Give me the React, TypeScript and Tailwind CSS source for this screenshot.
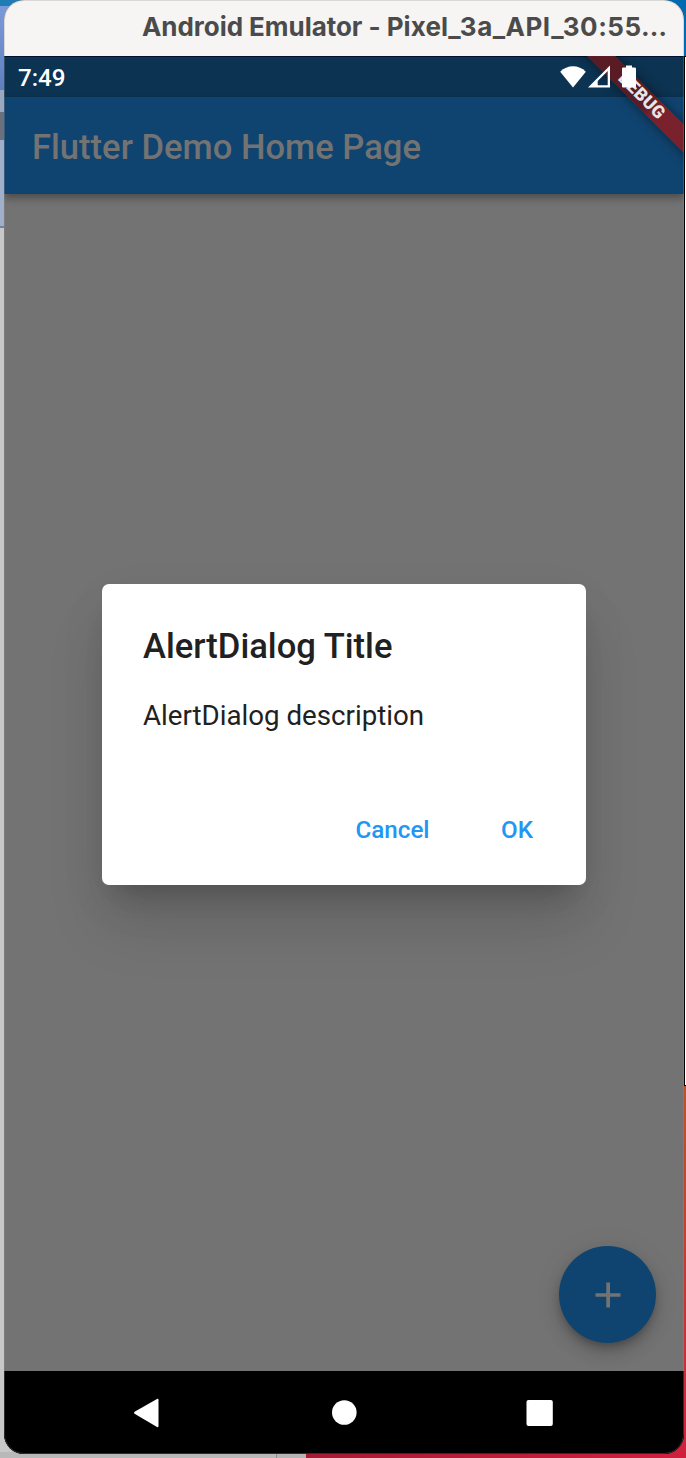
export default function App() {
  return (
    <div className="relative flex h-[1458px] w-[686px] overflow-hidden bg-[#c8c8c8] font-['Roboto',sans-serif]">
      <Desktop />
      <div className="relative ml-1 flex h-[1454px] w-[680px] flex-col overflow-hidden rounded-[20px] bg-black">
        <header className="h-14 shrink-0 bg-[#f6f5f3] pl-[138px] pt-[10px] font-['Inter',sans-serif] text-[26px] leading-[34px] font-bold whitespace-pre text-[#4b4b4b]">
          <span className="tracking-[-0.05px]">Android Emulator - </span>
          <span className="tracking-[0.1px]">Pixel</span>
          <span className="tracking-[0.5px]">_3a_API_30:55…</span>
        </header>
        <div className="relative flex grow flex-col overflow-hidden bg-[#737373]">
          <DebugRibbon />
          <div className="flex h-[41px] shrink-0 items-center justify-between border-t border-[#02112f] bg-[#0c3352] pr-[47px] pl-[14px]">
            <span className="pt-[2px] text-[24.2px] leading-none font-medium text-white">7:49</span>
            <StatusIcons />
          </div>
          <div className="flex h-[97px] shrink-0 items-center bg-[#104470] pt-[3px] pl-[28px] shadow-[0_4px_8px_rgba(0,0,0,0.35)]">
            <h1 className="text-[34.6px] leading-none font-medium whitespace-nowrap text-[#737373]">Flutter Demo Home Page</h1>
          </div>
          <main className="flex grow flex-col">
            <section className="mt-[390px] ml-[98px] flex h-[301px] w-[484px] shrink-0 flex-col rounded-[7px] bg-white px-[41px] shadow-[0_19px_26px_-12px_rgba(0,0,0,0.2),0_42px_60px_-2px_rgba(0,0,0,0.12),0_16px_60px_0_rgba(0,0,0,0.04)]">
              <h2 className="mt-[45px] text-[34.6px] leading-[35px] font-medium text-[#212121]">AlertDialog Title</h2>
              <p className="mt-[36px] text-[27.7px] leading-[32px] text-[#212121]">AlertDialog description</p>
              <div className="mt-[83px] flex justify-end gap-[71.5px] pr-[12px] text-[24.2px] leading-[30px] font-medium text-[#2196f3]">
                <button>Cancel</button>
                <button>OK</button>
              </div>
            </section>
            <button aria-label="Add" className="mt-auto mr-[28px] mb-[28px] flex size-[97px] items-center justify-center self-end rounded-full bg-[#104470] shadow-[0_5px_9px_-2px_rgba(0,0,0,0.25),0_10px_17px_rgba(0,0,0,0.15),0_2px_30px_rgba(0,0,0,0.07)]">
              <svg width="26" height="26" viewBox="0 0 26 26" fill="#737373">
                <path d="M11.3.5H15v10.800H25.500v3.500H15V25.500h-3.700V14.800H.5v-3.500h10.800z" />
              </svg>
            </button>
          </main>
        </div>
        <NavBar />
        <div className="pointer-events-none absolute inset-0 rounded-[20px] shadow-[inset_0_0_0_1px_rgba(150,150,150,0.3)]" />
      </div>
    </div>
  );
}

function Desktop() {
  return (
    <div className="absolute inset-0 flex flex-col justify-between">
      <div className="flex justify-between">
        <div className="flex w-[30px] flex-col">
          <div className="h-[6px] bg-[#1d7db4]" />
          <div className="h-[84px] bg-linear-to-b from-[#7b9ad8] to-[#5f80c0]" />
          <div className="h-[22px] bg-[#9aa9c0]" />
          <div className="h-[28px] bg-[#6b717c]" />
          <div className="h-[86px] bg-[#a0b0cb]" />
          <div className="h-[2px] bg-[#74829a]" />
        </div>
        <div className="flex w-[30px] flex-col items-end">
          <div className="h-[56px] w-full bg-[#006bb0]" />
          <div className="h-[1029px] w-[2px] border-t border-l border-black bg-white" />
          <div className="h-px w-[2px] bg-black" />
          <div className="h-[372px] w-full bg-linear-to-b from-[#b9532f] via-[#c43536] via-60% to-[#d01f3e]" />
        </div>
      </div>
      <div className="absolute bottom-0 left-0 flex h-[6px] w-full">
        <div className="w-[276px] bg-[#b9b9b9]" />
        <div className="w-px bg-[#909090]" />
        <div className="w-[29px] bg-[#b5b5b5]" />
        <div className="grow bg-linear-to-r from-[#a61a33] to-[#d01f3e]" />
      </div>
    </div>
  );
}

function DebugRibbon() {
  return (
    <div className="absolute top-[32.5px] left-[539.5px] flex h-[20.4px] w-[200px] rotate-45 items-center justify-center bg-linear-to-r from-[#591c25] from-52% to-[#79212c] to-58% shadow-[0_0_12px_rgba(0,0,0,0.5)]">
      <span className="relative -left-[4px] text-[17.6px] leading-none font-black tracking-[0.3px] text-[#e6e6e6]">DEBUG</span>
    </div>
  );
}

function StatusIcons() {
  return (
    <svg className="relative" width="77" height="24" viewBox="0 0 77 24" fill="#fff">
      <path d="M13 22.5.2 6.7C7-.7 19-.7 25.800 6.700z" />
      <path fillRule="evenodd" d="M28 22.500 50 .5v22zM37.700 20.300h10V6l-10 10z" />
      <path d="M66 .5h6v2h2.500c1 0 1.500.5 1.500 1.500v17c0 1-.5 1.500-1.500 1.500h-11c-1 0-1.500-.5-1.500-1.500V4c0-1 .5-1.500 1.500-1.500H66z" />
    </svg>
  );
}

function NavBar() {
  return (
    <nav className="flex h-[83px] shrink-0 items-center bg-black">
      <svg width="680" height="83" viewBox="0 0 680 83" fill="#fff">
        <path d="M131 40.500 153 28c1-.5 1.500 0 1.500 1v26c0 1-.5 1.500-1.500 1L131 43q-2-1.200 0-2.500z" />
        <circle cx="340.300" cy="41.500" r="12.300" />
        <rect x="522.500" y="29" width="26.300" height="26" rx="2" />
      </svg>
    </nav>
  );
}
